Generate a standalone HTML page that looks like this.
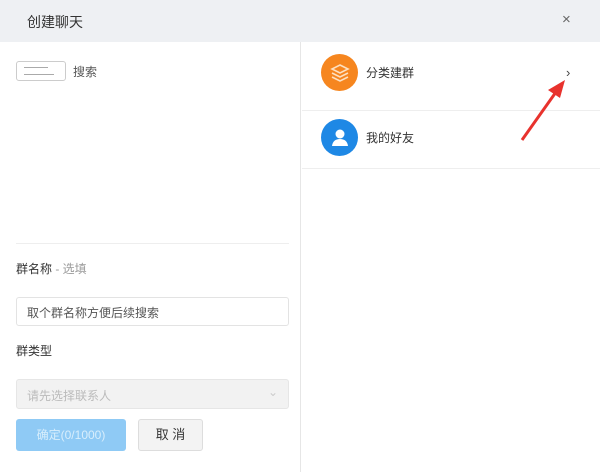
<!DOCTYPE html>
<html><head><meta charset="utf-8"><style>
*{margin:0;padding:0;box-sizing:border-box}
body{width:600px;height:472px;background:#fff;font-family:"Liberation Sans","Noto Sans CJK SC",sans-serif;position:relative;overflow:hidden;color:#333}
.a{position:absolute}
</style></head><body>
<div class="a" style="left:0;top:0;width:600px;height:42px;background:#eef0f3"></div>
<div class="a" style="left:27px;top:12px;font-size:14px;color:#333">创建聊天</div>
<div class="a" style="left:562px;top:11px;font-size:15px;color:#666">×</div>
<div class="a" style="left:300px;top:42px;width:1px;height:430px;background:#e6e6e6"></div>
<div class="a" style="left:16px;top:61px;width:50px;height:20px;border:1px solid #ccc;border-radius:3px"></div>
<div class="a" style="left:24px;top:67px;width:24px;height:1px;background:#aaa"></div>
<div class="a" style="left:24px;top:74px;width:30px;height:1px;background:#aaa"></div>
<div class="a" style="left:73px;top:63px;font-size:12px;color:#555">搜索</div>
<div class="a" style="left:16px;top:243px;width:273px;height:1px;background:#eee"></div>
<div class="a" style="left:16px;top:260px;font-size:12px;color:#333">群名称 <span style="color:#999">- 选填</span></div>
<div class="a" style="left:16px;top:297px;width:273px;height:29px;border:1px solid #e3e3e3;border-radius:3px;font-size:12px;color:#555;padding:6px 10px">取个群名称方便后续搜索</div>
<div class="a" style="left:16px;top:342px;font-size:12px;color:#333">群类型</div>
<div class="a" style="left:16px;top:379px;width:273px;height:30px;background:#f2f2f2;border:1px solid #e6e6e6;border-radius:3px;font-size:12px;color:#bbb;padding:7px 10px">请先选择联系人<span style="position:absolute;right:10px;top:5px;color:#ccc">⌄</span></div>
<div class="a" style="left:16px;top:419px;width:110px;height:32px;background:#8fcaf5;border-radius:3px;color:#d8eefc;font-size:12px;text-align:center;line-height:32px">确定(0/1000)</div>
<div class="a" style="left:138px;top:419px;width:65px;height:32px;background:#f3f3f3;border:1px solid #ddd;border-radius:3px;color:#333;font-size:13px;text-align:center;line-height:30px">取 消</div>
<div class="a" style="left:321px;top:54px;width:37px;height:37px;border-radius:50%;background:#f6861f"></div>
<svg class="a" style="left:329px;top:62px" width="22" height="22" viewBox="0 0 22 22" fill="none" stroke="#fde0c0" stroke-width="1.6"><path d="M11 3 L19 7 L11 11 L3 7 Z"/><path d="M3 11 L11 15 L19 11"/><path d="M3 15 L11 19 L19 15"/></svg>
<div class="a" style="left:366px;top:64px;font-size:12px;color:#333">分类建群</div>
<div class="a" style="left:566px;top:65px;font-size:13px;color:#444">›</div>
<div class="a" style="left:302px;top:110px;width:298px;height:1px;background:#eee"></div>
<div class="a" style="left:321px;top:119px;width:37px;height:37px;border-radius:50%;background:#1e88e5"></div>
<svg class="a" style="left:329px;top:126px" width="22" height="22" viewBox="0 0 22 22" fill="#fff"><circle cx="11" cy="8" r="4.5"/><path d="M3 20 Q4 13 11 13 Q18 13 19 20 Z"/></svg>
<div class="a" style="left:366px;top:129px;font-size:12px;color:#333">我的好友</div>
<div class="a" style="left:302px;top:168px;width:298px;height:1px;background:#eee"></div>
<svg class="a" style="left:0;top:0" width="600" height="472"><path d="M522 140 L556 92" stroke="#e8322d" stroke-width="3"/><path d="M565 80 L548 90 L560 98 Z" fill="#e8322d"/></svg>
</body></html>
